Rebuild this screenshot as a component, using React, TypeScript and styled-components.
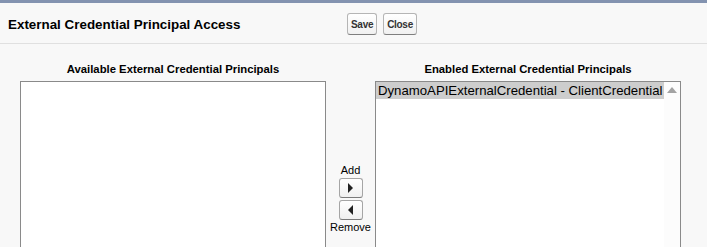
import React, { ReactElement } from 'react';
import styled, { createGlobalStyle } from 'styled-components';

const GlobalStyle = createGlobalStyle`
    html, body {
        margin: 0;
        padding: 0;
        background: #f8f8f8;
        font-family: 'Liberation Sans', Arial, sans-serif;
        color: #000;
        overflow: hidden;
    }
`;

const Page = styled.div`
    width: 707px;
    height: 247px;
    border-top: 3px solid #8393b0;
    box-sizing: border-box;
    overflow: hidden;
`;

const Header = styled.div`
    display: flex;
    align-items: center;
    height: 41px;
    padding-left: 8px;
    border-bottom: 1px solid #e0e0e0;
    box-sizing: border-box;
`;

const Title = styled.h1`
    margin: 0;
    padding-top: 2px;
    width: 339px;
    font-size: 13.4px;
    font-weight: bold;
    color: #000;
    white-space: nowrap;
`;

const Button = styled.button`
    height: 22px;
    padding: 0 3px;
    margin-right: 6px;
    margin-top: 2px;
    font-family: 'Liberation Sans', Arial, sans-serif;
    font-size: 10px;
    font-weight: bold;
    letter-spacing: -0.3px;
    color: #333;
    background: linear-gradient(#ffffff, #f1f1f1);
    border: 1px solid #b5b5b5;
    border-bottom-color: #7f7f7f;
    border-radius: 3px;
`;

const Body = styled.div`
    display: grid;
    grid-template-columns: 306px 49px 306px;
    padding-left: 20px;
    padding-top: 19px;
`;

const Column = styled.div`
    display: flex;
    flex-direction: column;
    align-items: center;
`;

const Label = styled.div`
    font-size: 11.3px;
    font-weight: bold;
    line-height: 13px;
    margin-bottom: 5px;
    white-space: nowrap;
`;

const ListBox = styled.div`
    width: 306px;
    height: 200px;
    box-sizing: border-box;
    background: #fff;
    border: 1px solid #8a8a8a;
    display: flex;
`;

const Options = styled.div`
    flex: 1;
    min-width: 0;
`;

const Option = styled.div<{ $selected?: boolean }>`
    height: 17px;
    line-height: 17px;
    padding-left: 2px;
    font-size: 13.2px;
    white-space: nowrap;
    overflow: hidden;
    background: ${({ $selected }) => ($selected ? '#cdcdcd' : 'transparent')};
`;

const ScrollTrack = styled.div`
    width: 16px;
    background: #fcfcfc;
    display: flex;
    justify-content: center;
    padding-top: 5px;
    box-sizing: border-box;
`;

const UpArrow = styled.div`
    width: 0;
    height: 0;
    border-left: 5px solid transparent;
    border-right: 5px solid transparent;
    border-bottom: 6px solid #a3a3a3;
`;

const Middle = styled.div`
    display: flex;
    flex-direction: column;
    align-items: center;
    padding-top: 101px;
`;

const MoveLabel = styled.div`
    font-size: 11px;
    line-height: 13px;
`;

const MoveButton = styled.button`
    width: 24px;
    height: 20px;
    margin: 1px 0;
    padding: 0;
    display: flex;
    align-items: center;
    justify-content: center;
    background: linear-gradient(#ffffff, #f0f0f0);
    border: 1px solid #a5a5a5;
    border-bottom-color: #7a7a7a;
    border-radius: 3px;
`;

const Arrow = styled.div<{ $dir: 'left' | 'right' }>`
    width: 0;
    height: 0;
    border-top: 5px solid transparent;
    border-bottom: 5px solid transparent;
    ${({ $dir }) =>
        $dir === 'right'
            ? 'border-left: 5px solid #222;'
            : 'border-right: 5px solid #222;'}
`;

const App: React.FC = (): ReactElement => {
    return (
        <Page>
            <GlobalStyle />
            <Header>
                <Title>External Credential Principal Access</Title>
                <Button>Save</Button>
                <Button>Close</Button>
            </Header>
            <Body>
                <Column>
                    <Label>Available External Credential Principals</Label>
                    <ListBox>
                        <Options />
                    </ListBox>
                </Column>
                <Middle>
                    <MoveLabel>Add</MoveLabel>
                    <MoveButton aria-label='Add'>
                        <Arrow $dir='right' />
                    </MoveButton>
                    <MoveButton aria-label='Remove'>
                        <Arrow $dir='left' />
                    </MoveButton>
                    <MoveLabel>Remove</MoveLabel>
                </Middle>
                <Column>
                    <Label>Enabled External Credential Principals</Label>
                    <ListBox>
                        <Options>
                            <Option $selected>
                                DynamoAPIExternalCredential - ClientCredential
                            </Option>
                        </Options>
                        <ScrollTrack>
                            <UpArrow />
                        </ScrollTrack>
                    </ListBox>
                </Column>
            </Body>
        </Page>
    );
};

export default App;
